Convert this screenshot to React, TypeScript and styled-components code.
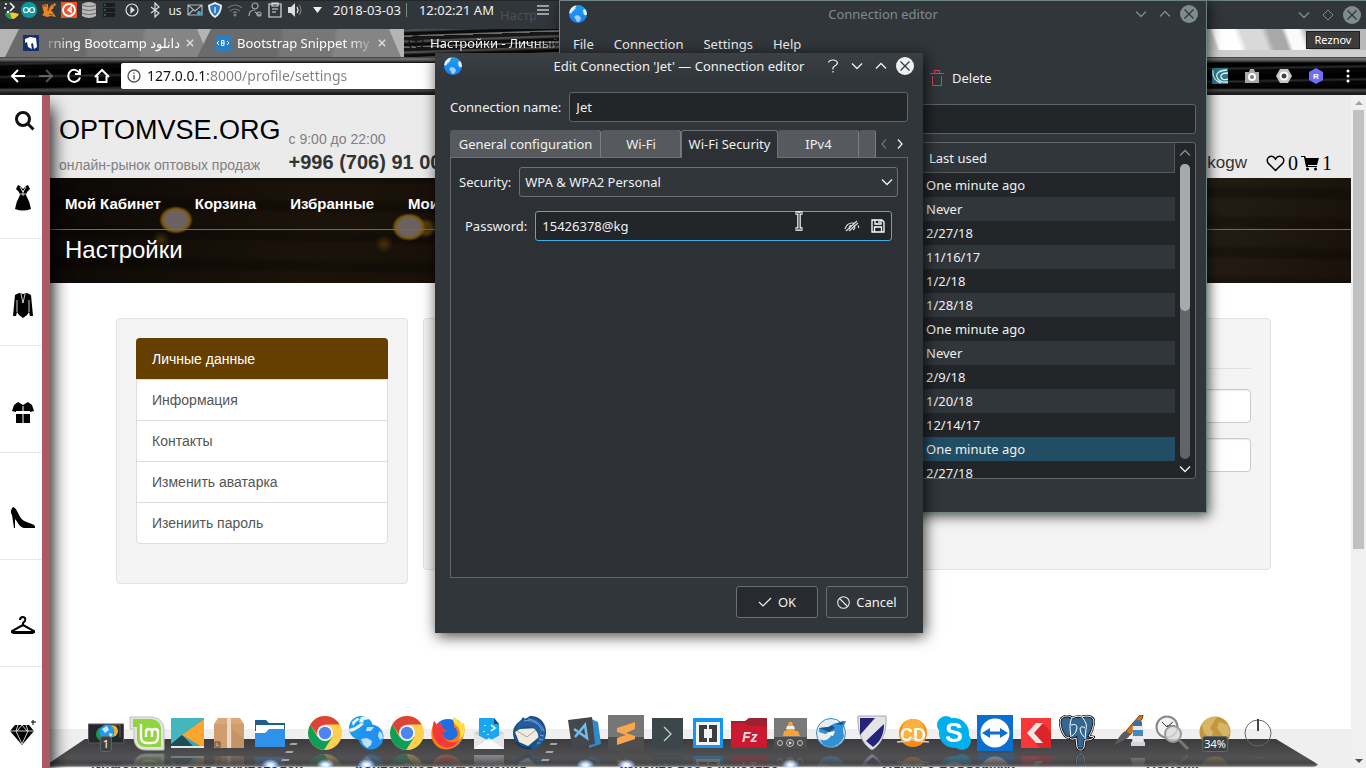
import React from "react";
import styled, { createGlobalStyle, css } from "styled-components";

const ui = `"Noto Sans", "DejaVu Sans", sans-serif`;
const web = `"Liberation Sans", Arial, sans-serif`;

const GlobalStyle = createGlobalStyle`
  *, *::before, *::after { box-sizing: border-box; }
  body { margin: 0; overflow: hidden; font-family: ${ui}; font-size: 13px; }
  button, input, select { font: inherit; color: inherit; margin: 0; padding: 0; border: 0; background: none; outline: 0; }
  h1, h2, p, ul { margin: 0; padding: 0; font-weight: 400; }
  ul { list-style: none; }
  a { color: inherit; text-decoration: none; }
  svg { display: block; flex: none; }
`;

const Desktop = styled.div`
  position: relative;
  height: 100vh;
  overflow: hidden;
  background: #fff;
`;

/* ---------- shared window parts ---------- */

const IconButton = styled.button`
  display: flex;
  align-items: center;
  justify-content: center;
  flex: none;
`;

const Chevron = ({ dir, size = 12, color = "currentColor" }: { dir: "up" | "down" | "left" | "right"; size?: number; color?: string }) => {
  const d = { up: "M1 8.500L6 3.500L11 8.500", down: "M1 3.500L6 8.500L11 3.500", left: "M8 1.500L4 6L8 10.500", right: "M4 1.500L8 6L4 10.500" }[dir];
  return (
    <svg width={size} height={size} viewBox="0 0 12 12" fill="none" stroke={color} strokeWidth="1.300"><path d={d} /></svg>
  );
};

const CloseGlyph = ({ fill, line }: { fill: string; line: string }) => (
  <svg width="18" height="18" viewBox="0 0 18 18">
    <circle cx="9" cy="9" r="9" fill={fill} />
    <path d="M4.500 4.500l9 9M13.500 4.500l-9 9" stroke={line} strokeWidth="1.300" />
  </svg>
);

const Globe = ({ size = 18 }: { size?: number }) => (
  <svg width={size} height={size} viewBox="0 0 18 18">
    <defs>
      <linearGradient id="sea" x1="0" y1="0" x2="0" y2="1"><stop offset="0" stopColor="#1ba0ea" /><stop offset="1" stopColor="#1b7cf8" /></linearGradient>
    </defs>
    <circle cx="9" cy="9" r="9" fill="url(#sea)" />
    <path d="M1 5C2 3 4 1.300 6.500 .600l1 .900-1.500 1 .500 1.500-1.500 .500-.500 1.500-1.500 .500L2.500 8.500.200 8z" fill="#e6f3ff" />
    <path d="M5.500 11l3-1 2.500 1.500 1 2-1.500 3-2.500.500-1-2.500-1.500-1.500z" fill="#9fd0fb" />
    <path d="M14 5l2-1 1.500 2.500.500 3-2 1-1.500-2z" fill="#dff0ff" />
  </svg>
);

const TitleButtons = styled.div<{ $inset?: number }>`
  display: flex;
  position: absolute;
  right: ${(p) => p.$inset ?? 6}px;
  top: 0;
  height: 100%;
  ${IconButton} { width: 24px; }
`;

/* ---------- browser ---------- */

const Browser = styled.section`
  display: flex;
  flex-direction: column;
  height: 100%;
`;

const BrowserTitle = styled.header`
  position: relative;
  flex: none;
  height: 29px;
  padding-bottom: 2px;
  background: #31363b;
  border-top: 1px solid #6f8583;
  color: #7f8c8d;
`;

const streaks = `repeating-linear-gradient(178deg, #161616 0 3px, #4d4d4d 4px 5px, #0b0b0b 7px 9px, #6a6a6a 10px 11px)`;

const TabStrip = styled.nav`
  display: flex;
  flex: none;
  height: 28px;
  background:
    linear-gradient(#0000 21px, #cfcfcf 21px) right / 160px 100% no-repeat,
    linear-gradient(70deg, #c9c9c9 0 8%, #fff 10% 22%, #d9d9d9 26% 38%, #a9a9a9 42% 50%, #fafafa 53% 60%, #b9b9b9 64%) right / 160px 100% no-repeat,
    linear-gradient(#b4b4b4, #b4b4b4) left / 404px 100% no-repeat,
    ${streaks};
`;

const BrowserTab = styled.div<{ $active?: boolean }>`
  display: flex;
  align-items: center;
  gap: 6px;
  width: ${(p) => (p.$active ? 155 : 204)}px;
  padding: 0 ${(p) => (p.$active ? 0 : 15)}px 0 ${(p) => (p.$active ? 4 : 18)}px;
  margin-left: ${(p) => (p.$active ? 20 : 5)}px;
  margin-right: ${(p) => (p.$active ? 0 : -17)}px;
  color: #fff;
  ${(p) => !p.$active && css`
    background: linear-gradient(100deg, #6b6b6b 0 40%, #777 42% 66%, #858585 68%);
    clip-path: polygon(0 100%, 14px 0, calc(100% - 12px) 0, 100% 100%);
  `}
`;

const TabLabel = styled.span<{ $fade: "left" | "right" }>`
  flex: 1;
  display: flex;
  justify-content: ${(p) => (p.$fade === "left" ? "flex-end" : "flex-start")};
  overflow: hidden;
  white-space: nowrap;
  mask-image: linear-gradient(to ${(p) => p.$fade}, #000 80%, transparent 105%);
`;

const Toolbar = styled.div`
  display: flex;
  align-items: center;
  flex: none;
  height: 38px;
  padding: 0 2px 0 4px;
  color: #fff;
  background:
    linear-gradient(#3a3a3a, #777 2px, #2c2c2c 5px, #0000 6px 31px, #4a4a4a 33px, #1c1c1c 36px),
    repeating-linear-gradient(179deg, #000 0 5px, #2b2b2b 7px, #050505 9px 13px);
  > ${IconButton} { width: 28px; height: 28px; }
`;

const Address = styled.div`
  display: flex;
  align-items: center;
  flex: 1;
  height: 26px;
  margin: 0 70px 0 5px;
  padding-left: 6px;
  gap: 6px;
  background: #fff;
  border-radius: 2px;
`;

const AddressInput = styled.input`
  flex: 1;
  font-size: 14px;
  line-height: 24px;
  color: transparent;
  caret-color: #111;
  background: linear-gradient(90deg, #111 61px, #808080 61px);
  background-clip: text;
`;

const Extensions = styled.div`
  display: flex;
  ${IconButton} { width: 32px; }
`;

const Profile = styled.button`
  position: absolute;
  right: 6px;
  top: 30px;
  width: 54px;
  height: 18px;
  font-size: 11px;
  line-height: 16px;
  color: #fff;
  background: #3b3b3b;
  border: 1px solid #1d1d1d;
`;

/* ---------- web page ---------- */

const Page = styled.div`
  display: flex;
  flex: 1;
  min-height: 0;
  font-family: ${web};
`;

const Rail = styled.nav`
  flex: none;
  width: 50px;
  z-index: 1;
  background: #fff;
  border-right: 8px solid #ad5865;
  box-shadow: 2px 12px 18px #000;
  clip-path: inset(0 -40px 0 0);
`;

const RailItem = styled.a<{ $first?: boolean }>`
  display: flex;
  align-items: flex-end;
  justify-content: center;
  height: ${(p) => (p.$first ? 37 : 107)}px;
  padding: 0 0 ${(p) => (p.$first ? 1 : 26)}px ${(p) => (p.$first ? 8 : 3)}px;
  border-bottom: ${(p) => (p.$first ? 0 : 1)}px solid #e8e8e8;
`;

const Content = styled.main`
  display: flex;
  flex-direction: column;
  flex: 1;
  min-width: 0;
  overflow: hidden;
`;

const SiteHeader = styled.header`
  display: flex;
  align-items: flex-end;
  flex: none;
  gap: 8px;
  height: 83px;
  padding: 0 19px 3px 9px;
  background: #ebebeb;
  color: #808080;
  font-size: 14px;
  line-height: 20px;
`;

const Brand = styled.h1`
  margin-bottom: 8px;
  font-size: 27px;
  line-height: 34px;
  color: #000;
`;

const Phone = styled.p`
  font-size: 20px;
  line-height: 26px;
  font-weight: 700;
  color: #333;
`;

const Account = styled.div`
  display: flex;
  align-items: center;
  gap: 3px;
  margin-left: auto;
  font: 20px/24px "Liberation Serif", serif;
  color: #000;
`;

const UserName = styled.a`
  margin-right: 16px;
  font: 17px/24px ${web};
  color: #333;
`;

const Hero = styled.div`
  flex: none;
  height: 105px;
  color: #fff;
  background:
    radial-gradient(ellipse 17px 14px at 126px 42px, #6b6161 0 62%, #7a5a0e 80%, #7a5a0e00 100%),
    radial-gradient(ellipse 17px 14px at 359px 49px, #6b6161 0 62%, #7a5a0e 80%, #7a5a0e00 100%),
    radial-gradient(circle 10px at 376px 50px, #4d3a0d 0 55%, #4d3a0d00),
    radial-gradient(circle 9px at 111px 62px, #40300f, #40300f00),
    radial-gradient(circle 9px at 334px 66px, #4a2f0b, #4a2f0b00),
    repeating-linear-gradient(1deg, #0000 0 14px, #0004 18px 24px, #0000 30px),
    linear-gradient(100deg, #0b0805, #1b130a 20%, #120c07 60%, #241d14 88%, #1a120a);
`;

const HeroNav = styled.nav`
  display: flex;
  gap: 34px;
  height: 52px;
  padding-left: 15px;
  border-bottom: 1px solid #6f6a66;
  font-size: 15px;
  line-height: 51px;
  font-weight: 700;
`;

const HeroTitle = styled.h2`
  padding-left: 15px;
  font-size: 24px;
  line-height: 40px;
`;

const Columns = styled.div`
  display: grid;
  grid-template-columns: 292px 1fr;
  align-items: start;
  gap: 15px;
  flex: none;
  height: 446px;
  padding: 35px 80px 0 66px;
`;

const Well = styled.div`
  padding: 19px;
  background: #f4f4f4;
  border: 1px solid #e2e2e2;
  border-radius: 4px;
`;

const List = styled.ul`
  margin-bottom: 20px;
  background: #fff;
  border: 1px solid #ddd;
  border-radius: 4px;
`;

const ListLink = styled.a<{ $active?: boolean }>`
  display: block;
  margin: ${(p) => (p.$active ? "-1px -1px 0" : 0)};
  padding: ${(p) => (p.$active ? "1px 16px 0" : "0 15px")};
  border-top: ${(p) => (p.$active ? 0 : 1)}px solid #ddd;
  border-radius: ${(p) => (p.$active ? "4px 4px 0 0" : 0)};
  font-size: 14px;
  line-height: 40px;
  color: ${(p) => (p.$active ? "#fff" : "#555")};
  background: ${(p) => (p.$active ? "#643f00" : "none")};
`;

const FormLegend = styled.div`
  height: 31px;
  margin-bottom: 20px;
  border-bottom: 1px solid #e0e0e0;
`;

const Field = styled.input`
  && {
    display: block;
    width: 100%;
    height: 34px;
    margin-bottom: 15px;
    background: #fff;
    border: 1px solid #ccc;
    border-radius: 4px;
    box-shadow: inset 0 1px 1px rgba(0, 0, 0, 0.08);
  }
`;

const FormWell = styled(Well)`
  padding-bottom: 82px;
`;

const SiteFooter = styled.footer`
  display: grid;
  grid-template-columns: 264px 264px 263px 264px 1fr;
  flex: none;
  padding: 31px 0 0 41px;
  background: #efefef;
  font-size: 14px;
  line-height: 20px;
  font-weight: 700;
  color: #333;
`;

const PageScroll = styled.div`
  display: flex;
  flex-direction: column;
  align-items: center;
  flex: none;
  width: 15px;
  background: #f0f0f0;
`;

const ScrollArrow = styled(IconButton)`
  width: 15px;
  height: 15px;
`;

const PageThumb = styled.div`
  width: 11px;
  height: 439px;
  margin-bottom: auto;
  background: #c1c1c1;
`;

/* ---------- top panel ---------- */

const Panel = styled.div`
  position: absolute;
  left: 0;
  top: 0;
  display: flex;
  align-items: center;
  width: 559px;
  height: 29px;
  padding: 0 9px 10px 5px;
  background: #31363b;
  border-top: 1px solid #23272a;
  color: #eff0f1;
`;

const Tray = styled(IconButton)<{ $w?: number }>`
  width: ${(p) => p.$w ?? 20}px;
  height: 18px;
  font-size: 12px;
`;

const Clock = styled.time<{ $rule?: boolean }>`
  padding-right: ${(p) => (p.$rule ? 5 : 0)}px;
  margin-left: ${(p) => (p.$rule ? 4 : 12)}px;
  border-right: ${(p) => (p.$rule ? "1px solid #7f8c8d" : 0)};
  line-height: 14px;
  white-space: nowrap;
`;

const GhostTitle = styled.span`
  flex: 1;
  width: 0;
  overflow: hidden;
  margin: 10px 0 0 6px;
  line-height: 18px;
  color: #4b5156;
`;

/* ---------- connection editor ---------- */

const Editor = styled.section`
  position: absolute;
  left: 559px;
  top: 0;
  width: 648px;
  padding-bottom: 33px;
  background: #31363b;
  border: 1px solid #6f8583;
  box-shadow: 2px 3px 12px rgba(0, 0, 0, 0.7);
  color: #eff0f1;
`;

const WindowTitle = styled.header<{ $dim?: boolean }>`
  position: relative;
  display: flex;
  align-items: center;
  justify-content: center;
  height: 26px;
  color: ${(p) => (p.$dim ? "#7f8c8d" : "#eff0f1")};
  background: ${(p) => (p.$dim ? "none" : "linear-gradient(#3b4045, #31363b)")};
`;

const AppIcon = styled.span`
  position: absolute;
  left: 9px;
  top: 4px;
`;

const MenuBar = styled.nav`
  display: flex;
  align-items: center;
  gap: 20px;
  height: 33px;
  padding-left: 13px;
`;

const EditorTools = styled.div`
  display: flex;
  height: 36px;
  margin-bottom: 8px;
  padding-left: 370px;
  button { display: flex; align-items: center; gap: 8px; }
`;

const inset = css`
  background: #232629;
  border: 1px solid #616569;
  border-radius: 3px;
`;

const Search = styled.input`
  && {
    ${inset}
    display: block;
    width: calc(100% - 20px);
    height: 30px;
    margin: 0 10px 8px;
  }
`;

const TableFrame = styled.div`
  ${inset}
  display: flex;
  height: 337px;
  margin: 0 10px;
  overflow: hidden;
`;

const ConnTable = styled.table`
  flex: 1;
  height: max-content;
  border-collapse: separate;
  border-spacing: 0;
  th, td { text-align: left; font-weight: 400; padding: 0 0 0 3px; }
  th { height: 30px; padding-left: 6px; background: #31363b; border-bottom: 1px solid #54585c; }
  th:last-child { border-right: 1px solid #54585c; width: 252px; }
`;

const Row = styled.tr<{ $selected?: boolean }>`
  height: 24px;
  &:nth-child(even) { background: #31363b; }
  && { ${(p) => p.$selected && "background: #224e65;"} }
`;

const TableScroll = styled.div`
  display: flex;
  flex-direction: column;
  align-items: center;
  justify-content: space-between;
  width: 20px;
  padding: 4px 0 3px;
`;

const Track = styled.div`
  width: 10px;
  height: 295px;
  border-radius: 5px;
  background: #616569;
  &::before { content: ""; display: block; height: 147px; border-radius: 5px; background: #a8a9aa; }
`;

/* ---------- edit dialog ---------- */

const Dialog = styled.section`
  position: absolute;
  left: 435px;
  top: 53px;
  width: 488px;
  background: #31363b;
  box-shadow: 2px 3px 14px rgba(0, 0, 0, 0.75);
  color: #eff0f1;
`;

const DialogBody = styled.div`
  padding: 13px 15px 15px;
`;

const FormRow = styled.div<{ $indent?: boolean }>`
  display: flex;
  align-items: center;
  gap: 8px;
  height: 30px;
  ${(p) => p.$indent && "margin-top: 14px; padding: 0 6px;"}
`;

const NameInput = styled.input`
  && { ${inset} flex: 1; height: 30px; padding: 0 6px; }
`;

const Tabs = styled.div`
  display: flex;
  height: 28px;
  margin: 8px 0 -1px;
`;

const TabButton = styled.button<{ $w: number; $active?: boolean }>`
  && {
    position: relative;
    width: ${(p) => p.$w}px;
    padding-bottom: ${(p) => (p.$active ? 1 : 0)}px;
    color: #eff0f1;
    background: ${(p) => (p.$active ? "#2d3136" : "#565a5e")};
    border: 1px solid #6d7175;
    border-width: ${(p) => (p.$active ? "1px 1px 0" : "0 0 1px 0")};
    box-shadow: ${(p) => (p.$active ? "none" : "inset -1px 0 #7b7f82")};
    z-index: ${(p) => (p.$active ? 1 : 0)};
    border-radius: 3px 3px 0 0;
    white-space: nowrap;
  }
`;

const TabArrows = styled.div`
  display: flex;
  flex: 1;
  ${IconButton} { flex: 1; }
`;

const Pane = styled.div`
  min-height: 421px;
  padding: 9px 9px 9px 8px;
  background: #2d3136;
  border: 1px solid #616569;
`;

const SelectBox = styled.div`
  position: relative;
  flex: 1;
  select {
    appearance: none;
    width: 100%;
    height: 30px;
    padding: 0 5px;
    background: #31363b;
    border: 1px solid #6d7175;
    border-radius: 3px;
  }
  svg { position: absolute; right: 5px; top: 9px; pointer-events: none; }
`;

const PasswordBox = styled.div`
  display: flex;
  align-items: center;
  flex: 1;
  height: 30px;
  padding-left: 6px;
  background: #232629;
  border: 1px solid #3daee9;
  border-radius: 3px;
  input { flex: 1; min-width: 0; }
  button { width: 26px; }
`;

const Actions = styled.div`
  display: flex;
  justify-content: flex-end;
  gap: 8px;
  margin-top: 8px;
`;

const ActionButton = styled.button<{ $primary?: boolean }>`
  && {
    display: flex;
    align-items: center;
    justify-content: center;
    gap: 6px;
    width: 82px;
    height: 32px;
    background: ${(p) => (p.$primary ? "#272a2e" : "#31363b")};
    border: 1px solid #6a6e72;
    border-radius: 3px;
  }
`;

const Pointer = styled.svg`
  position: absolute;
  left: 794px;
  top: 211px;
`;

/* ---------- dock ---------- */

const Dock = styled.nav`
  position: absolute;
  left: 47px;
  right: 48px;
  bottom: 1px;
  display: flex;
  align-items: flex-end;
  justify-content: center;
  gap: 14px;
  height: 56px;
  overflow: hidden;
  &::before {
    content: "";
    position: absolute;
    inset: auto 0 0;
    height: 28px;
    background: linear-gradient(#3c3c3e, #525254 70%, #454547 24px, #555557e8);
    border-bottom: 1px solid #999;
    clip-path: polygon(38px 0, calc(100% - 42px) 0, calc(100% - 3px) 84%, 100% 92%, calc(100% - 4px) 100%, 4px 100%, 0 92%, 3px 84%);
  }
`;

const DockGroup = styled.div<{ $w?: number }>`
  position: relative;
  display: flex;
  height: 100%;
  &:last-child { margin-left: -4px; }
  & + &::before {
    content: "";
    position: absolute;
    left: -24px;
    bottom: 5px;
    width: 17px;
    height: 19px;
    background: repeating-linear-gradient(#a5a5a7 0 2px, #0000 2px 8px);
    clip-path: polygon(60% 0, 100% 0, 45% 100%, 0 100%);
  }
  &:last-child::before {
    left: 18px;
    clip-path: polygon(0 0, 40% 0, 100% 100%, 55% 100%);
  }
  > button { width: ${(p) => p.$w ?? 41}px; }
`;

const DockButton = styled.button<{ $running?: boolean }>`
  && {
    position: relative;
    display: flex;
    justify-content: center;
    padding-top: 4px;
    background: ${(p) => (p.$running ? "radial-gradient(ellipse 9px 6px at 50% 54px, #fff 0 20%, #b9d5ff 45%, #b9d5ff00)" : "none")};
  }
  > svg { -webkit-box-reflect: below 2px linear-gradient(transparent 60%, rgba(0, 0, 0, 0.4)); }
`;

const Badge = styled.span<{ $wide?: boolean }>`
  position: absolute;
  top: 25px;
  left: 50%;
  transform: translateX(-50%);
  padding: 0 ${(p) => (p.$wide ? 1 : 2)}px;
  font-size: 11px;
  line-height: 14px;
  color: #fff;
  background: #3e4143;
  border: 1px solid #666;
  border-radius: 3px;
`;

/* ---------- drawings ---------- */

const D = ({ children }: { children: React.ReactNode }) => (
  <svg width="36" height="36" viewBox="0 0 36 36">{children}</svg>
);

const Chrome = () => (
  <D>
    <circle cx="18" cy="18" r="17" fill="#fdd04d" />
    <path d="M3.300 9.500A17 17 0 0 0 17 35L25.400 22 18 18 10.600 22z" fill="#0f9d58" />
    <path d="M3.300 9.500A17 17 0 0 1 32.700 9.500H18L10.500 20z" fill="#db4437" />
    <circle cx="18" cy="18" r="8" fill="#f4f4f4" /><circle cx="18" cy="18" r="6.200" fill="#4a85f0" />
  </D>
);

const Blue = () => (
  <D>
    <circle cx="13" cy="13" r="12" fill="#1d9ce8" /><circle cx="23" cy="22" r="12.500" fill="#2090f2" />
    <path d="M4 7l5-4 3 1-4 3-3 4zM13 2l6-1 3 3-6 1-1 3-4-1zM1 14l6-2 6-4 3 1-5 4-5 3-4 1z" fill="#e9f6ff" />
    <path d="M13 24l6-1 5 3-1 4-4 3-4-4zM31 16l3 2 1 5-3 2-2-4zM19 12l7 0-3 4-5 0z" fill="#bfe0fb" />
  </D>
);

const dock: Record<string, React.ReactNode> = {
  preview: <D><path d="M.500 9h35v19H.500z" fill="#25272d" stroke="#55585c" /><circle cx="15" cy="19" r="7" fill="#139a57" /><circle cx="24" cy="16" r="6" fill="#f5b323" /><circle cx="19" cy="17" r="7.500" fill="#2599ee" /><path d="M14 14l5-3 2 4-4 3zM21 18l4 1-3 4z" fill="#cfe9ff" /><path d="M21 10h11v12" fill="none" stroke="#5d6269" /></D>,
  mint: <D><path d="M1 2h20c9 0 14 5 14 13v20H17C9 35 5 30 5 23V14H1z" fill="#e3e3e3" stroke="#bfbfbf" /><path d="M4 4h17c7 0 11 4 11 11v17H17c-6 0-9-3-9-9V12H4z" fill="#8fd53c" /><path d="M12 9v13q0 6 6 6h5q6 0 6-6v-5q0-3-3-3t-3 3v5M23 17q0-3-3-3t-3 3v5" fill="none" stroke="#fff" strokeWidth="2.400" /></D>,
  player: <D><path d="M1 3h33v30H1z" fill="#39a9b3" /><path d="M1 3h33L12 20 1 29z" fill="#43b7bd" /><path d="M12 20L34 4v29z" fill="#fba52f" /><path d="M12 20l13 13H1V29z" fill="#254c54" /><path d="M1 31h33v2H1z" fill="#d8eee6" /></D>,
  box: <D><path d="M7 3h22l4 6v24H3V9z" fill="#d9a877" /><path d="M3 9h30v24H3z" fill="#cf9d6e" /><path d="M16 3h4v30h-4z" fill="#ead9c6" /><path d="M21 14l12 10v9H21z" fill="#bc895b" opacity=".5" /><path d="M4 27h5v5H4zM6 29h2" fill="none" stroke="#60442c" /></D>,
  folder: <D><path d="M3 5h11l3 3h16v8H3z" fill="#1f5f8d" /><path d="M4 10h28v10H4z" fill="#fff" /><path d="M3 18h10l4-4h16v18H3z" fill="#2e91ea" /></D>,
  chrome: <Chrome />,
  globes: <Blue />,
  firefox: <D><circle cx="18" cy="19" r="15" fill="#1d6fe0" /><path d="M4 6l3 4 4-2 1 5 5 3-4 1c0 9 9 11 14 4 2-4-1-8-3-9l0-9c5 3 6 2 8 8 1-2 1-3 0-5 4 6 3 15-1 20C22 39 6 36 2 24 0 16 3 12 4 6z" fill="#ff7a18" /><path d="M4 6l3 4 4-2 1 5 5 3-4 1c0 9 8 13 15 9-4 9-17 8-22 0C2 20 2 12 4 6z" fill="#f4393c" /><path d="M24 1c-2 5 0 8 3 10 4 4 4 10 1 14 8-3 8-13 5-18l-1 4C31 6 25 5 24 1z" fill="#ffe03a" /></D>,
  mail: <D><path d="M3 18l15-8 15 8v16H3z" fill="#cfd3d6" /><path d="M8 3h15l5 6v14l-10 4-10-4z" fill="#19a6ee" /><path d="M23 3l5 6h-5z" fill="#1d4c6d" /><path d="M3 18l15 8 15-8v16H3z" fill="#e4e6e8" /><path d="M3 34l15-11 15 11z" fill="#f8f9f9" /><path d="M20 10l4 3-4 3M14 10v1M13 16v1M17 19v1" stroke="#bfeaff" strokeWidth="2" fill="none" /></D>,
  thunderbird: <D><path d="M18 1c10-1 17 8 16 18-1 9-8 16-17 16C8 34 1 27 1 18 1 12 5 8 9 5l2-3 2 2z" fill="#1f4f87" /><path d="M3 17l5-3 18-1 1 9-11 9-9-4z" fill="#f1ebe0" /><path d="M5 16l10 6 10-8" fill="none" stroke="#b0a89b" /><path d="M10 5c9-5 22 0 23 13 0 9-7 15-13 16 6-5 8-11 5-17-3-5-8-7-14-5l-7 3c0-4 3-8 6-10z" fill="#245c9c" /><path d="M12 6c8-2 16 3 18 10M16 4c8 1 14 6 16 12M28 20l4 1M27 24l4 1M25 28l3 0" stroke="#6ea6d8" fill="none" /><path d="M4 27c4 5 9 7 15 6" fill="none" stroke="#17375f" strokeWidth="2" /></D>,
  vscode: <D><path d="M22 3l9 4 3 22-12 4z" fill="#2d8bc9" /><path d="M1 5l24-3 3 27-23 4z" fill="#44484c" /><path d="M7 14l13 9-2-13-10 12" fill="none" stroke="#6fbdec" strokeWidth="2.500" /></D>,
  sublime: <D><path d="M0 0h36v36H0z" fill="#767676" /><path d="M0 22h36v14H0z" fill="#4e4e4e" /><path d="M9 13l18-6v7l-9 4 9 3v3L9 30v-7l9-3-9-3z" fill="#f9a64d" /></D>,
  konsole: <D><path d="M3 3h31v31H3z" fill="#3b474a" /><path d="M15 12l7 7-7 7" fill="none" stroke="#c8cfd1" strokeWidth="1.300" /></D>,
  brackets: <D><path d="M3 3h30v30H3z" fill="#1496f3" /><path d="M6 7h24v23H6z" fill="#f3f3f3" /><path d="M9 10h8v4h-3v9h3v4H9zM19 10h8v17h-8v-4h3v-9h-3z" fill="#3b3d40" /></D>,
  filezilla: <D><path d="M0 6h14l4-3h18v8H0z" fill="#9c2230" /><path d="M0 8h14l5 3h17v22H0z" fill="#cb1a30" /><text x="11" y="27" fontFamily="Liberation Sans" fontWeight="700" fontStyle="italic" fontSize="14" fill="#f6dfe2">Fz</text></D>,
  vlc: <D><path d="M2 3h33v31H2z" fill="#797979" /><path d="M2 22h33v12H2z" fill="#4d4d4d" /><path d="M17 7h3l3 9h3l2 5H12l-1 0 1-5h2z" fill="#f9a33b" /><path d="M15 11h7l1 3h-9zM13 17h11" fill="#eee" /><g fill="none" stroke="#c3c3c3"><circle cx="8" cy="28" r="2.500" /><circle cx="18" cy="28" r="3.500" /><circle cx="28" cy="28" r="2.500" /></g><path d="M17 26l3 2-3 2z" fill="#ddd" /></D>,
  wolf: <D><circle cx="18" cy="18" r="14.500" fill="#e7edf0" stroke="#2c8cd1" /><path d="M6 13l11-1 3-3 11-3 2 0-3 8 1 7c-2 7-8 11-14 11-6-1-9-4-10-8 4 3 8 1 11-3l2-3-8 1-6-2z" fill="#358fd4" /><path d="M6 13l9-1 4-2 3 3-6 4zM22 9l9-3-2 4z" fill="#15568c" /><path d="M13 18l9-2-2 5z" fill="#fff" /></D>,
  shield: <D><path d="M4 1h28c1 16-4 28-14 34C8 29 3 17 4 1z" fill="#e3e3e8" stroke="#a9a9ae" /><path d="M6 3h15L6 20zM30 9c0 11-4 18-11 23l-7-6z" fill="#24247c" /></D>,
  cd: <D><circle cx="18" cy="18" r="14" fill="#f98d14" /><circle cx="18" cy="15" r="11" fill="#fcb13d" /><text x="5" y="26" fontFamily="Liberation Sans" fontWeight="700" fontSize="18" fill="#fff">CD</text><path d="M2 27l12-1 3-3 4 3 13 1" stroke="#d0d0d0" fill="none" strokeWidth="1.500" /></D>,
  skype: <D><circle cx="18" cy="18" r="15" fill="#00aff0" /><circle cx="10" cy="10" r="9" fill="#00aff0" /><circle cx="26" cy="26" r="9" fill="#00aff0" /><text x="9" y="27" fontFamily="Liberation Sans" fontWeight="700" fontSize="27" fill="#fff">S</text></D>,
  teamviewer: <D><path d="M0 0h36v36H0z" fill="#0b6fd1" /><circle cx="18" cy="18" r="14.500" fill="#fff" /><path d="M5 18l8-5v3.500h10V13l8 5-8 5v-3.500H13V23z" fill="#0b6fd1" /></D>,
  red: <D><path d="M3 3h30v30H3z" fill="#f93638" /><path d="M24 8l9 9v16H22L12 20z" fill="#db2528" /><path d="M18 8h7l-9 10 9 10h-7L9 18z" fill="#f1e5e5" /></D>,
  postgres: <D><path d="M4 2c4-2 7-1 9 1 4-2 7-2 10-1 5-2 12-1 12 5-1 7-3 11-5 14l5 1c-2 3-6 3-9 3l-1 7c-1 4-6 4-7 0l-1-9c-3 2-6 1-7-1-3 2-6-3-8-9C1 8 0 4 4 2z" fill="#336791" stroke="#111" strokeWidth="2.500" /><path d="M4 2c4-2 7-1 9 1 4-2 7-2 10-1 5-2 12-1 12 5-1 7-3 11-5 14l5 1c-2 3-6 3-9 3l-1 7c-1 4-6 4-7 0l-1-9c-3 2-6 1-7-1-3 2-6-3-8-9C1 8 0 4 4 2zM13 3c-3 5-2 11-1 19M12 10q6-2 6 3-1 6-5 8M23 2c4 5 5 8 4 12l-1 10M26 13q-4-3-5 1 0 4 4 8" fill="none" stroke="#fff" /></D>,
  paint: <D><path d="M32 0l-3 0L15 16l4 4 12-16z" fill="#d9741d" stroke="#6b3b12" /><path d="M14 16l5 4c-3 5-9 6-17 11 4-4 6-11 12-15z" fill="#5b5b5b" /><path d="M22 7q5-4 9 0v5h-9z" fill="#3a6ea5" /><path d="M22 11h10l1 19H21z" fill="#e6e8ea" /><path d="M22 15h10v6H22z" fill="#4b86bd" /><path d="M20 27h14v4H20z" fill="#d3d6d8" /></D>,
  clock: <D><circle cx="13" cy="12" r="10.500" fill="#f3f3f3" stroke="#888" strokeWidth="2" /><path d="M13 12l-5-5M13 12l6-5" stroke="#333" /><path d="M13 11h8" stroke="#c33" strokeWidth="2" /><circle cx="19" cy="19" r="8" fill="#d9dcded0" stroke="#999" strokeWidth="2" /><path d="M25 25l9 9" stroke="#777" strokeWidth="3" /></D>,
  gold: <D><circle cx="18" cy="17" r="15.500" fill="#c1983f" /><path d="M5 10C9 2 15 1 20 2l-4 6-3 5 3 4-2 7-7-6zM22 7l9 3 2 8-5 7-4-7-4-5z" fill="#e4c981" opacity=".6" /></D>,
  power: <D><circle cx="18" cy="18" r="13" fill="none" stroke="#666" /><path d="M18 4v12" stroke="#444" strokeWidth="2" /></D>,
};

const groups: { width?: number; items: [string, string, boolean?, string?][] }[] = [
  { items: [["preview", "Activities", false, "1"], ["mint", "Menu"], ["player", "Media"], ["box", "Archive"], ["folder", "Files", true]] },
  { items: [["chrome", "Chrome", true], ["globes", "Network", true], ["chrome", "Chrome profile"], ["firefox", "Firefox"], ["mail", "Mail"], ["thunderbird", "Thunderbird"]] },
  { items: [["vscode", "Code", true], ["sublime", "Sublime", true], ["konsole", "Konsole"], ["brackets", "Brackets"], ["filezilla", "FileZilla"], ["vlc", "VLC", true], ["wolf", "Wolf"], ["shield", "Shield"], ["cd", "CD"], ["skype", "Skype"], ["teamviewer", "TeamViewer"], ["red", "Launcher"], ["postgres", "PostgreSQL"]] },
  { width: 43, items: [["paint", "Paint"], ["clock", "Search"], ["gold", "Battery", false, "34%"], ["power", "Power"]] },
];

const T = ({ children, stroke = "#dcdedf" }: { children: React.ReactNode; stroke?: string }) => (
  <svg width="16" height="16" viewBox="0 0 16 16" fill="none" stroke={stroke} strokeWidth="1.200">{children}</svg>
);

const tray: [string, React.ReactNode][] = [
  ["Arduino", <T><circle cx="8" cy="8" r="8" fill="#0d9a9f" stroke="none" /><circle cx="5" cy="8" r="2.500" stroke="#fff" /><circle cx="11" cy="8" r="2.500" stroke="#fff" /></T>],
  ["Matlab", <T><path d="M1 3l6-1v5l1 2q0-7 6-8l1 2-3 2 1 1-3 2 3 4 2 3-5-1-4 1-5-2 2-2-1-4z" fill="#f08421" stroke="none" /><path d="M2 4l4 0M7 9q0-5 6-7M8 12l4 1" stroke="#7c4715" /></T>],
  ["Camera", <T><path d="M0 0h16v16H0z" fill="#f0532a" stroke="none" /><circle cx="8" cy="8" r="6" stroke="#fff" strokeWidth="1.800" /><path d="M11 4L7 8l4 3M10 6v4" stroke="#fff" strokeWidth="1.500" /></T>],
  ["Database", <T><path d="M1 2q7-4 14 0v12q-7 4-14 0z" fill="#b8b8b8" stroke="none" /><path d="M1 3q7 3 14 0M1 7q7 3 14 0M1 11q7 3 14 0" stroke="#777" /></T>],
  ["Server", <T><path d="M2 1h12v4H2zM2 6h12v4H2zM2 11h12v4H2z" fill="#191c1e" stroke="none" /><path d="M3 3h2M3 8h2M3 13h2" stroke="#3c9a3c" /></T>],
];

const trayRight: [string, React.ReactNode][] = [
  ["Bluetooth", <T><path d="M4 5l8 6-4 4V1l4 4-8 6" /></T>],
  ["Layout", "us"],
  ["Mail", <T stroke="#a9b4bb"><path d="M1 3h14v10H1zM1 3l7 6 7-6M1 13l5-5" /><circle cx="12" cy="11" r="2" fill="#3daee9" stroke="none" /></T>],
  ["Firewall", <T><path d="M8 0l7 3q0 9-7 13Q1 12 1 3z" fill="#e9eef2" stroke="none" /><path d="M8 2l5 2q0 6-5 10Q3 10 3 4z" fill="#2e77c8" stroke="none" /><path d="M8 5v6" stroke="#fff" /></T>],
  ["Wi-Fi", <T stroke="#6f7579"><path d="M1 6q7-6 14 0M3 9q5-4 10 0M6 11q2-2 4 0" /><circle cx="8" cy="13" r="1" fill="#dcdedf" /></T>],
  ["Users", <T stroke="#a4a8ab"><circle cx="8" cy="4" r="3" /><path d="M2 14q0-6 6-6M8 10l6 4" /><circle cx="12" cy="12" r="2" /></T>],
  ["Clipboard", <T><path d="M2 2h12v13H2zM5 1h6v3H5zM5 7h6M5 10h4" /></T>],
  ["Volume", <T><path d="M1 5h3l4-4v14l-4-4H1z" fill="#dcdedf" stroke="none" /><path d="M10 5q2 3 0 6" /><path d="M12 3q4 5 0 10" stroke="#777c80" /></T>],
];

const B = ({ children }: { children: React.ReactNode }) => (
  <svg width="28" height="28" viewBox="0 0 28 28" fill="#000">{children}</svg>
);

const rail: [string, React.ReactNode][] = [
  ["Платья", <B><path d="M9 1l2 1 3 3 3-3 2-1 2 4-3 3-1 3q4 7 5 14-8 3-16 0 1-7 5-14l-1-3-3-3z" /><path d="M11 10h6M11 3l3 5 3-5M14 6v6" stroke="#fff" fill="none" strokeWidth=".8" /></B>],
  ["Костюмы", <B><path d="M10 2l4 1 4-1 4 2 2 21h-3l-1-4-2 3-4 3-4-3-2-3-1 4H4L6 4z" /><path d="M12 3l2 9 2-9M8 9l0 12M20 9l0 12" stroke="#fff" fill="none" strokeWidth=".8" /></B>],
  ["Подарки", <B><path d="M9 4l5 3 5-3 4 3 2 6-4 1v-1H7v1l-4-1 2-6zM7 16h14v9H7z" /><path d="M14 8v17M6 15h16" stroke="#fff" /></B>],
  ["Обувь", <B><path d="M4 2c3 1 4 4 6 8 3 6 7 7 13 9 3 1 3 2 3 4H15C10 22 9 17 6 14v9H5L3 10C1 8 2 4 4 2z" /></B>],
  ["Одежда", <B><path d="M11 8q0-3 3-3t2 4l-2 2v3M14 13l-11 6q0 2 2 2h18q2 0 2-2z" fill="none" stroke="#000" strokeWidth="2" /><path d="M2 19h24v2H2z" /></B>],
  ["Украшения", <B><path d="M6 6h14l5 6-12 14L1 12z" /><path d="M1 12h24M9 6l-2 6 6 13 6-13-2-6M13 6l-5 6M13 6l5 6" stroke="#fff" fill="none" strokeWidth=".8" /><path d="M24 1v5M22 3h5" stroke="#000" /></B>],
];

const lastUsed = ["One minute ago", "Never", "2/27/18", "11/16/17", "1/2/18", "1/28/18", "One minute ago", "Never", "2/9/18", "1/20/18", "12/14/17", "One minute ago", "2/27/18"];

const TabClose = () => (
  <IconButton aria-label="Close tab"><svg width="8" height="8" viewBox="0 0 10 10" stroke="#ddd" strokeWidth="1.800"><path d="M1 1l8 8M9 1L1 9" /></svg></IconButton>
);

const BrowserWindow = () => (
  <Browser>
    <BrowserTitle>
      <TitleButtons $inset={2}>
        <IconButton aria-label="Minimize"><Chevron dir="down" /></IconButton>
        <IconButton aria-label="Restore"><svg width="12" height="12" viewBox="0 0 12 12" fill="none" stroke="currentColor"><path d="M6 1l5 5-5 5-5-5z" /></svg></IconButton>
        <IconButton aria-label="Close"><CloseGlyph fill="#7f8c8d" line="#31363b" /></IconButton>
      </TitleButtons>
      <Profile>Reznov</Profile>
    </BrowserTitle>
    <TabStrip>
      <BrowserTab>
        <svg width="16" height="16" viewBox="0 0 16 16"><path d="M0 0h16v16H0z" fill="#14306d" /><path d="M2 4l5-2 6 1 1 9-3 2-1-6-2 1 1 5-4-2-1-5-2 1z" fill="#fff" /></svg>
        <TabLabel $fade="left">rning Bootcamp دانلود</TabLabel>
        <TabClose />
      </BrowserTab>
      <BrowserTab>
        <svg width="16" height="16" viewBox="0 0 16 16"><path d="M0 0h16v16H0z" fill="#2b7fc0" /><path d="M4 6L2 8l2 2M12 6l2 2-2 2M6.500 5.500h2.500v5H6.500zM6.500 8h3" fill="none" stroke="#fff" /></svg>
        <TabLabel $fade="right">Bootstrap Snippet my</TabLabel>
        <TabClose />
      </BrowserTab>
      <BrowserTab $active>
        <svg width="16" height="16" viewBox="0 0 16 16" fill="none" stroke="#151515" strokeWidth="1.500"><circle cx="8" cy="8" r="7" /><path d="M4 5h8M8 5v7" /></svg>
        <TabLabel $fade="right">Настройки - Личный</TabLabel>
      </BrowserTab>
    </TabStrip>
    <Toolbar>
      {[
        ["Back", "M15 8H2M8 2L2 8l6 6", 1], ["Forward", "M1 8h13M8 2l6 6-6 6", 0.3],
        ["Reload", "M13.500 5A6 6 0 1 0 14 9.500M14 1v5H9", 1], ["Home", "M1 9l7-7 7 7M3.500 8v6h9V8", 1],
      ].map(([n, d, o]) => (
        <IconButton key={n as string} aria-label={n as string}>
          <svg width="16" height="16" viewBox="0 0 16 16" fill="none" stroke="#fff" strokeWidth="2" opacity={o as number}><path d={d as string} /></svg>
        </IconButton>
      ))}
      <Address>
        <svg width="14" height="14" viewBox="0 0 14 14" fill="none" stroke="#555" strokeWidth="1.400"><circle cx="7" cy="7" r="6" /><path d="M7 6v4.500M7 3.500v1.300" /></svg>
        <AddressInput aria-label="Address" defaultValue="127.0.0.1:8000/profile/settings" />
      </Address>
      <Extensions>
        <IconButton aria-label="Swirl"><svg width="16" height="16" viewBox="0 0 16 16"><path d="M0 0h16v16H0z" fill="#2b7c90" /><path d="M15 2Q3 3 5 9t11 5M16 5Q8 5 9 9t7 2M1 2q-1 10 8 13" fill="none" stroke="#e8f4f6" strokeWidth="1.300" /></svg></IconButton>
        <IconButton aria-label="Screenshot"><svg width="16" height="16" viewBox="0 0 16 16"><path d="M1 4h4l1-3h4l1 3h4v11H1z" fill="#a8a8a8" /><circle cx="8" cy="9" r="3" fill="#777" stroke="#fff" strokeWidth="2" /></svg></IconButton>
        <IconButton aria-label="Settings"><svg width="16" height="16" viewBox="0 0 16 16"><path d="M4 1h8l4 7-4 7H4L0 8z" fill="#c6c6c6" /><circle cx="8" cy="8" r="3.500" fill="#444" stroke="#fff" strokeWidth="2" /></svg></IconButton>
        <IconButton aria-label="R"><svg width="16" height="16" viewBox="0 0 16 16"><path d="M8 0l7 4v8l-7 4-7-4V4z" fill="#6d70f6" /><text x="5" y="11" fontSize="8" fontWeight="700" fontFamily="Liberation Sans" fill="#fff">R</text></svg></IconButton>
        <IconButton aria-label="Menu"><svg width="4" height="14" viewBox="0 0 4 14" fill="#fff"><circle cx="2" cy="2" r="1.500" /><circle cx="2" cy="7" r="1.500" /><circle cx="2" cy="12" r="1.500" /></svg></IconButton>
      </Extensions>
    </Toolbar>
    <Page>
      <Rail>
        <RailItem $first href="#" aria-label="Поиск"><svg width="20" height="20" viewBox="0 0 20 20" fill="none" stroke="#111" strokeWidth="3"><circle cx="8" cy="8" r="6.500" /><path d="M12.500 12.500l6 6" /></svg></RailItem>
        {rail.map(([n, i]) => <RailItem key={n} href="#" aria-label={n}>{i}</RailItem>)}
      </Rail>
      <Content>
        <SiteHeader>
          <div><Brand>OPTOMVSE.ORG</Brand><p>онлайн-рынок оптовых продаж</p></div>
          <div><p>с 9:00 до 22:00</p><Phone>+996 (706) 91 00</Phone></div>
          <Account>
            <UserName href="#">kogw</UserName>
            <svg width="19" height="17" viewBox="0 0 19 17" fill="none" stroke="#000" strokeWidth="1.500"><path d="M9.500 15.500L2 8Q0 4 3 2q4-2 6.500 2Q12 0 16 2q3 2 1 6z" /></svg>
            <span>0</span>
            <svg width="18" height="16" viewBox="0 0 18 16"><path d="M0 1h4l1 2h13l-2 7H7l0 1h9v1H5L3 2H0z" fill="#000" /><circle cx="6.500" cy="14" r="1.500" /><circle cx="14.500" cy="14" r="1.500" /></svg>
            <span>1</span>
          </Account>
        </SiteHeader>
        <Hero>
          <HeroNav><a href="#">Мой Кабинет</a><a href="#">Корзина</a><a href="#">Избранные</a><a href="#">Мои</a></HeroNav>
          <HeroTitle>Настройки</HeroTitle>
        </Hero>
        <Columns>
          <Well>
            <List>
              {["Личные данные", "Информация", "Контакты", "Изменить аватарка", "Изениить пароль"].map((t, i) => (
                <li key={t}><ListLink href="#" $active={i === 0}>{t}</ListLink></li>
              ))}
            </List>
          </Well>
          <FormWell>
            <FormLegend />
            <Field aria-label="Имя" />
            <Field aria-label="Фамилия" />
          </FormWell>
        </Columns>
        <SiteFooter>
          <span>Информация для покупателей</span><span>Контактная информация</span><span>Узнайте все о качестве</span><span>Служба поддержки</span><span>Помощь</span>
        </SiteFooter>
      </Content>
      <PageScroll>
        <ScrollArrow aria-label="Scroll up"><svg width="8" height="4" viewBox="0 0 8 4"><path d="M4 0l4 4H0z" fill="#a0a0a0" /></svg></ScrollArrow>
        <PageThumb />
        <ScrollArrow aria-label="Scroll down"><svg width="8" height="4" viewBox="0 0 8 4"><path d="M0 0h8L4 4z" fill="#505050" /></svg></ScrollArrow>
      </PageScroll>
    </Page>
  </Browser>
);

const TopPanel = () => (
  <Panel>
    <Tray $w={14} aria-label="Launcher"><svg width="16" height="18" viewBox="0 0 16 18"><path d="M6 2l4 4-4 4" fill="none" stroke="#fff" strokeWidth="1.500" /><g fill="#fff"><circle cx="2" cy="3" r="1" /><circle cx="1" cy="7" r="1" /><circle cx="4" cy="11" r="1.300" /></g><path d="M1 13q7-3 14 0-3 5-7 5t-7-5z" fill="#f6c931" /><path d="M1 13l5-1 2 6q-5 0-7-5z" fill="#19a05a" /></svg></Tray>
    {tray.map(([n, i]) => <Tray key={n} aria-label={n}>{i}</Tray>)}
    <Tray $w={26} aria-label="Play"><T><circle cx="8" cy="8" r="6" /><path d="M7 5.500l3 2.500-3 2.500z" fill="#dcdedf" /></T></Tray>
    {trayRight.map(([n, i]) => <Tray key={n} aria-label={n}>{i}</Tray>)}
    <Tray $w={24} aria-label="More"><svg width="9" height="6" viewBox="0 0 9 6"><path d="M0 0h9L4.500 6z" fill="#eff0f1" /></svg></Tray>
    <Clock $rule>2018-03-03</Clock>
    <Clock>12:02:21 AM</Clock>
    <GhostTitle>Настройки</GhostTitle>
    <Tray aria-label="Panel menu" $w={14}><svg width="12" height="10" viewBox="0 0 12 10" stroke="#c0c3c5" strokeWidth="1.500"><path d="M0 1h12M0 5h12M0 9h12" /></svg></Tray>
  </Panel>
);

const ConnectionEditor = () => (
  <Editor>
    <WindowTitle $dim>
      <AppIcon><Globe /></AppIcon>
      Connection editor
      <TitleButtons $inset={5}>
        <IconButton aria-label="Minimize"><Chevron dir="down" /></IconButton>
        <IconButton aria-label="Maximize"><Chevron dir="up" /></IconButton>
        <IconButton aria-label="Close"><CloseGlyph fill="#7f8c8d" line="#31363b" /></IconButton>
      </TitleButtons>
    </WindowTitle>
    <MenuBar>{["File", "Connection", "Settings", "Help"].map((m) => <button key={m}>{m}</button>)}</MenuBar>
    <EditorTools>
      <button>
        <svg width="14" height="16" viewBox="0 0 14 16" fill="none" stroke="#da4453"><path d="M0 3.500h14M4.500 3V.500h5V3M2.500 6v9.500h9V6" /></svg>
        Delete
      </button>
    </EditorTools>
    <Search aria-label="Search connections" />
    <TableFrame>
      <ConnTable>
        <thead><tr><th /><th>Last used</th></tr></thead>
        <tbody>{lastUsed.map((t, i) => <Row key={i} $selected={i === 11}><td /><td>{t}</td></Row>)}</tbody>
      </ConnTable>
      <TableScroll>
        <Chevron dir="up" color="#8b8f92" />
        <Track />
        <Chevron dir="down" />
      </TableScroll>
    </TableFrame>
  </Editor>
);

const EditDialog = () => (
  <Dialog role="dialog">
    <WindowTitle>
      <AppIcon><Globe /></AppIcon>
      Edit Connection 'Jet' — Connection editor
      <TitleButtons>
        <IconButton aria-label="Help"><svg width="12" height="14" viewBox="0 0 12 14" fill="none" stroke="currentColor" strokeWidth="1.200"><path d="M1.500 3.500Q2 1 6 1t4.500 3Q10 6 7 7.500L6 9v1.500M6 12v1.500" /></svg></IconButton>
        <IconButton aria-label="Minimize"><Chevron dir="down" /></IconButton>
        <IconButton aria-label="Maximize"><Chevron dir="up" /></IconButton>
        <IconButton aria-label="Close"><CloseGlyph fill="#eff0f1" line="#31363b" /></IconButton>
      </TitleButtons>
    </WindowTitle>
    <DialogBody>
      <FormRow>
        <label htmlFor="conn-name">Connection name:</label>
        <NameInput id="conn-name" defaultValue="Jet" />
      </FormRow>
      <Tabs role="tablist">
        <TabButton $w={151}>General configuration</TabButton>
        <TabButton $w={80}>Wi-Fi</TabButton>
        <TabButton $w={97} $active>Wi-Fi Security</TabButton>
        <TabButton $w={81}>IPv4</TabButton>
        <TabButton $w={17} aria-label="IPv6" />
        <TabArrows>
          <IconButton aria-label="Previous tabs"><Chevron dir="left" color="#6d7175" /></IconButton>
          <IconButton aria-label="Next tabs"><Chevron dir="right" /></IconButton>
        </TabArrows>
      </Tabs>
      <Pane>
        <FormRow>
          <label htmlFor="security">Security:</label>
          <SelectBox>
            <select id="security"><option>WPA &amp; WPA2 Personal</option></select>
            <Chevron dir="down" />
          </SelectBox>
        </FormRow>
        <FormRow $indent>
          <label htmlFor="password">Password:</label>
          <PasswordBox>
            <input id="password" type="text" defaultValue="15426378@kg" />
            <IconButton aria-label="Hide password"><svg width="16" height="12" viewBox="0 0 16 12" fill="none" stroke="#dcdedf" strokeWidth="1.100"><path d="M1 9Q3 3 8 3q2 0 3 .500M14 5.500l1 2.500M2 11L13 1M5 11l9-8M6 9Q4 7 7 5M10 5q2 3-1 5" /></svg></IconButton>
            <IconButton aria-label="Store password"><svg width="14" height="14" viewBox="0 0 14 14" fill="none" stroke="#fff" strokeWidth="1.300"><path d="M1 1h10l2 2v10H1zM4 1v4h6V1M3.500 13V8h7v5M8 2v2" /></svg></IconButton>
          </PasswordBox>
        </FormRow>
      </Pane>
      <Actions>
        <ActionButton $primary><svg width="14" height="12" viewBox="0 0 14 12" fill="none" stroke="#eff0f1" strokeWidth="1.200"><path d="M1 6l4 4 8-8" /></svg>OK</ActionButton>
        <ActionButton><svg width="13" height="13" viewBox="0 0 13 13" fill="none" stroke="#eff0f1" strokeWidth="1.100"><circle cx="6.500" cy="6.500" r="5.800" /><path d="M2.500 2.500l8 8" /></svg>Cancel</ActionButton>
      </Actions>
    </DialogBody>
  </Dialog>
);

export default function App() {
  return (
    <Desktop>
      <GlobalStyle />
      <BrowserWindow />
      <TopPanel />
      <ConnectionEditor />
      <EditDialog />
      <Pointer width="10" height="20" viewBox="0 0 10 20" fill="none"><path d="M1.500 2h7M5 2v16M1.500 18h7" stroke="#fff" strokeWidth="3.500" /><path d="M2 2h2.500M5.500 2H8M5 2v16M2 18h6" stroke="#333" strokeWidth="1.200" /></Pointer>
      <Dock>
        {groups.map((g, i) => (
          <DockGroup key={i} $w={g.width}>
            {g.items.map(([id, name, running, badge]) => (
              <DockButton key={name} aria-label={name} $running={running}>
                {dock[id]}
                {badge && <Badge $wide={badge.length > 1}>{badge}</Badge>}
              </DockButton>
            ))}
          </DockGroup>
        ))}
      </Dock>
    </Desktop>
  );
}
